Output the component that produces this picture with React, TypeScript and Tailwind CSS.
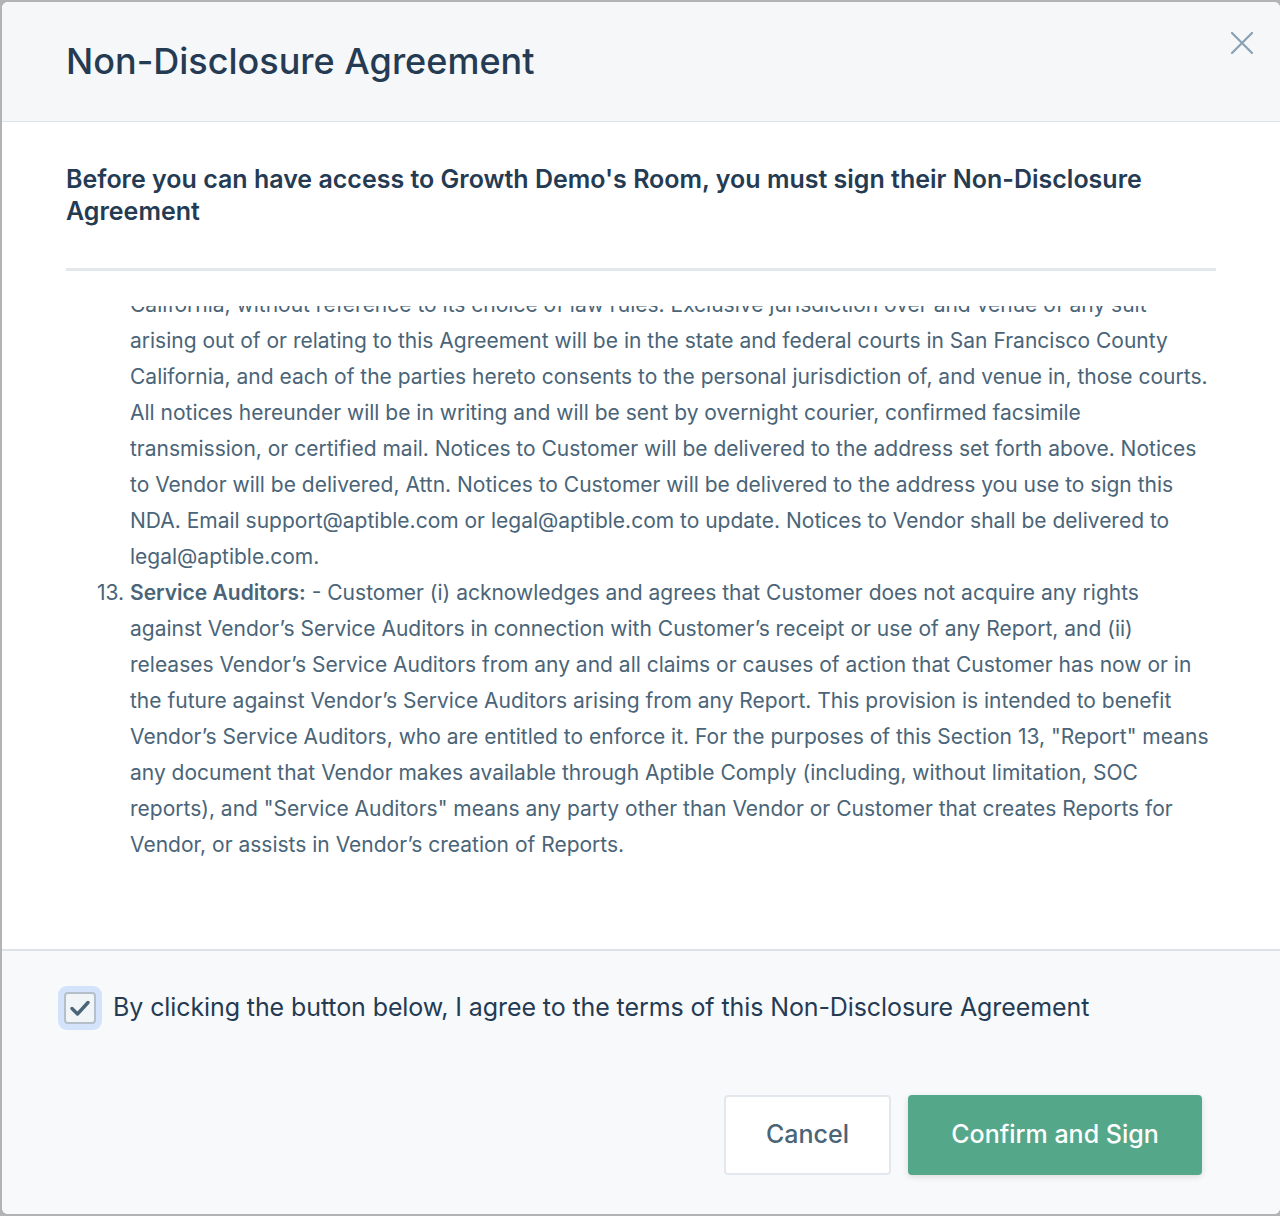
import { useState } from 'react';

const font = { fontFamily: 'Inter, "Liberation Sans", Arial, sans-serif' };

function CloseIcon() {
  return (
    <svg width="22" height="22" viewBox="0 0 22 22" fill="none">
      <path d="M1 1 L21 21 M21 1 L1 21" stroke="#8aa0b3" strokeWidth="2.2" strokeLinecap="round" />
    </svg>
  );
}

function Checkbox({ checked, onChange }: { checked: boolean; onChange: () => void }) {
  return (
    <button
      type="button"
      onClick={onChange}
      className="flex h-[44px] w-[44px] shrink-0 items-center justify-center rounded-[9px] bg-[#d3e3fb]"
    >
      <span className="flex h-[32px] w-[32px] items-center justify-center rounded-[4px] border-2 border-[#b4bfca] bg-[#f2f5f8]">
        {checked && (
          <svg width="20" height="16" viewBox="0 0 20 16" fill="none">
            <path d="M2 8.5 L7.5 14 L18 2.5" stroke="#4c6477" strokeWidth="3.4" strokeLinecap="round" strokeLinejoin="round" />
          </svg>
        )}
      </span>
    </button>
  );
}

function ListItem({ num, children }: { num?: string; children: React.ReactNode }) {
  return (
    <div className="flex">
      <div className="w-[64px] shrink-0 pr-[6px] text-right">{num}</div>
      <div className="flex-1">{children}</div>
    </div>
  );
}

export default function App() {
  const [agreed, setAgreed] = useState(true);

  return (
    <div className="h-[1216px] bg-[#b3b3b3] py-[2px] pl-[2px]" style={font}>
      <div className="flex h-full flex-col overflow-hidden rounded-[6px] bg-white">
        {/* header */}
        <div className="relative flex h-[120px] shrink-0 items-center border-b border-[#dde2e8] bg-[#f5f7f9] px-16">
          <h2 className="pb-[2px] text-[36px] font-medium text-[#243b53]">Non-Disclosure Agreement</h2>
          <button type="button" className="absolute right-[27px] top-[30px]">
            <CloseIcon />
          </button>
        </div>

        {/* body */}
        <div className="flex min-h-0 flex-1 flex-col px-16 pt-[41px]">
          <p className="text-[25px] font-semibold leading-[32px] text-[#243b53]">
            Before you can have access to Growth Demo's Room, you must sign their Non-Disclosure Agreement
          </p>
          <div className="mt-[41px] h-[3px] shrink-0 bg-[#e3e8ed]" />
          {/* scrolled agreement text, first line half hidden */}
          <div className="mt-[35px] min-h-0 flex-1 overflow-hidden">
            <div className="-mt-[19px] text-[21px] leading-[36px] text-[#4a6478]">
              <ListItem>
                California, without reference to its choice of law rules. Exclusive jurisdiction over and venue of any suit
                arising out of or relating to this Agreement will be in the state and federal courts in San Francisco County
                California, and each of the parties hereto consents to the personal jurisdiction of, and venue in, those courts.
                All notices hereunder will be in writing and will be sent by overnight courier, confirmed facsimile
                transmission, or certified mail. Notices to Customer will be delivered to the address set forth above. Notices
                to Vendor will be delivered, Attn. Notices to Customer will be delivered to the address you use to sign this
                NDA. Email support@aptible.com or legal@aptible.com to update. Notices to Vendor shall be delivered to
                legal@aptible.com.
              </ListItem>
              <ListItem num="13.">
                <span className="font-semibold">Service Auditors:</span> - Customer (i) acknowledges and agrees that Customer
                does not acquire any rights against Vendor’s Service Auditors in connection with Customer’s receipt or use of
                any Report, and (ii) releases Vendor’s Service Auditors from any and all claims or causes of action that
                Customer has now or in the future against Vendor’s Service Auditors arising from any Report. This provision
                is intended to benefit Vendor’s Service Auditors, who are entitled to enforce it. For the purposes of this
                Section 13, "Report" means any document that Vendor makes available through Aptible Comply (including,
                without limitation, SOC reports), and "Service Auditors" means any party other than Vendor or Customer that
                creates Reports for Vendor, or assists in Vendor’s creation of Reports.
              </ListItem>
            </div>
          </div>
        </div>

        {/* footer */}
        <div className="h-[265px] shrink-0 border-t-2 border-[#dde2e8] bg-[#f8f9fb]">
          <div className="flex items-center gap-[11px] pl-[56px] pt-[35px]">
            <Checkbox checked={agreed} onChange={() => setAgreed(!agreed)} />
            <span className="text-[25px] tracking-[-0.1px] text-[#243b53]">
              By clicking the button below, I agree to the terms of this Non-Disclosure Agreement
            </span>
          </div>
          <div className="mt-[65px] flex justify-end gap-[17px] pr-[78px]">
            <button
              type="button"
              className="h-[80px] w-[167px] rounded-[4px] border-2 border-[#e3e8ee] bg-white text-[25px] font-medium text-[#4a6478]"
            >
              Cancel
            </button>
            <button
              type="button"
              className="h-[80px] w-[294px] rounded-[4px] bg-[#55a78a] text-[25px] font-medium text-white shadow-[0_2px_6px_rgba(0,0,0,0.12)]"
            >
              Confirm and Sign
            </button>
          </div>
        </div>
      </div>
    </div>
  );
}
